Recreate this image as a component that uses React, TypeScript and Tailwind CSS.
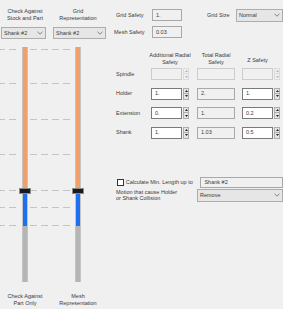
import React from "react";

const font = { fontFamily: '"Liberation Sans", Arial, sans-serif' };

function Chevron() {
  return (
    <svg width="6" height="4" viewBox="0 0 6 4" className="shrink-0">
      <path d="M0.5 0.8 L3 3.2 L5.5 0.8" fill="none" stroke="#6b6b6b" strokeWidth="0.8" />
    </svg>
  );
}

function Select({ w, h = 12, text }: { w: number; h?: number; text: string }) {
  return (
    <div
      className="flex items-center justify-between border border-[#adadad] bg-[#e6e6e6] pl-[2px] pr-[2px]"
      style={{ width: w, height: h }}
    >
      <span>{text}</span>
      <Chevron />
    </div>
  );
}

function Box({ w, text = "", kind }: { w: number; text?: string; kind: "edit" | "ro" | "dis" }) {
  const cls =
    kind === "edit"
      ? "border-[#7a7a7a] bg-white"
      : kind === "ro"
      ? "border-[#a8a8a8] bg-[#f0f0f0]"
      : "border-[#cccccc] bg-[#f0f0f0]";
  return (
    <div className={`flex h-[12px] items-center border pl-[3px] ${cls}`} style={{ width: w }}>
      {text}
    </div>
  );
}

function Spinner({ disabled }: { disabled?: boolean }) {
  const c = disabled ? "#b8b8b8" : "#222";
  const b = disabled ? "border-[#dcdcdc] bg-[#f0f0f0]" : "border-[#adadad] bg-[#e6e6e6]";
  return (
    <div className="ml-[1px] flex h-[12px] w-[6px] flex-col">
      <div className={`flex h-[6px] items-center justify-center border ${b}`}>
        <svg width="3" height="2" viewBox="0 0 3 2">
          <path d="M0 2 L1.5 0 L3 2 Z" fill={c} />
        </svg>
      </div>
      <div className={`flex h-[6px] items-center justify-center border border-t-0 ${b}`}>
        <svg width="3" height="2" viewBox="0 0 3 2">
          <path d="M0 0 L1.5 2 L3 0 Z" fill={c} />
        </svg>
      </div>
    </div>
  );
}

function Dashes({ w, offset = 0 }: { w: number; offset?: number }) {
  const n = Math.ceil((w + offset) / 11) + 1;
  return (
    <div className="flex h-[1px] overflow-hidden" style={{ width: w }}>
      <div className="flex shrink-0 gap-[4px]" style={{ marginLeft: -offset }}>
        {Array.from({ length: n }).map((_, i) => (
          <div key={i} className="h-[1px] w-[7px] shrink-0 bg-[#c4c4c4]" />
        ))}
      </div>
    </div>
  );
}

function Track() {
  return (
    <div className="relative flex h-[235px] w-[6px] flex-col border-x border-[#c4c4c4]">
      <div className="h-[141px] bg-[#f2a06b]" />
      <div className="h-[38px] bg-[#1f6ff2]" />
      <div className="flex-1 bg-[#b5b5b5]" />
      <div className="absolute left-[-4px] top-[141px] h-[6px] w-[12px] border border-[#8a8a8a] bg-[#1a1a1a]" />
    </div>
  );
}

export default function App() {
  const lineYs = [2, 36, 72, 107, 143, 160, 178];
  return (
    <div
      className="flex h-[309px] w-[283px] overflow-hidden bg-[#f0f0f0] text-[5.5px] text-[#3a3a3a]"
      style={font}
    >
      {/* left panel */}
      <div className="flex w-[110px] flex-col">
        <div className="flex h-[26px] pt-[8px] leading-[6.5px]">
          <div className="w-[50px] text-center">
            Check Against
            <br />
            Stock and Part
          </div>
          <div className="w-[56px] text-center">
            Grid
            <br />
            Representation
          </div>
        </div>
        <div className="mt-[1px] flex">
          <div className="ml-[1px]">
            <Select w={45} text="Shank #2" />
          </div>
          <div className="ml-[7px]">
            <Select w={53} text="Shank #2" />
          </div>
        </div>
        <div className="relative mt-[8px] h-[235px]">
          {lineYs.map((y) => (
            <div key={y} className="absolute left-0 flex" style={{ top: y }}>
              <Dashes w={18} offset={2} />
              <div className="ml-[12px]">
                <Dashes w={42} />
              </div>
            </div>
          ))}
          <div className="relative flex">
            <div className="ml-[22px]">
              <Track />
            </div>
            <div className="ml-[47px]">
              <Track />
            </div>
          </div>
        </div>
        <div className="mt-[11px] flex leading-[6.5px]">
          <div className="w-[50px] text-center">
            Check Against
            <br />
            Part Only
          </div>
          <div className="w-[56px] text-center">
            Mesh
            <br />
            Representation
          </div>
        </div>
      </div>

      {/* right panel */}
      <div className="flex w-[173px] flex-col">
        <div className="mt-[9px] flex h-[12px] items-center">
          <span className="ml-[6px] w-[36px] whitespace-nowrap">Grid Safety</span>
          <Box w={30} text="1." kind="ro" />
          <span className="ml-[25px] w-[29px] whitespace-nowrap">Grid Size</span>
          <Select w={47} h={13} text="Normal" />
        </div>
        <div className="mt-[5px] flex h-[12px] items-center">
          <span className="ml-[4px] w-[38px] whitespace-nowrap">Mesh Safety</span>
          <Box w={30} text="0.03" kind="ro" />
        </div>

        <div className="mt-[14px] flex h-[16px] whitespace-nowrap leading-[6.5px]">
          <div className="w-[41px]" />
          <div className="flex w-[38px] flex-col items-center">
            <span>Additional Radial</span>
            <span>Safety</span>
          </div>
          <div className="ml-[8px] flex w-[38px] flex-col items-center">
            <span>Total Radial</span>
            <span>Safety</span>
          </div>
          <div className="ml-[7px] flex w-[31px] items-center justify-center">Z Safety</div>
        </div>

        <div className="flex flex-col gap-[7.5px]">
          {[
            { l: "Spindle", a: "", t: "", z: "", dis: true },
            { l: "Holder", a: "1.", t: "2.", z: "1." },
            { l: "Extension", a: "0.", t: "1.", z: "0.2" },
            { l: "Shank", a: "1.", t: "1.03", z: "0.5" },
          ].map((r) => (
            <div key={r.l} className="flex h-[12px] items-center">
              <span className="ml-[6px] w-[35px]">{r.l}</span>
              <Box w={31} text={r.a} kind={r.dis ? "dis" : "edit"} />
              <Spinner disabled={r.dis} />
              <div className="ml-[8px]">
                <Box w={38} text={r.t} kind={r.dis ? "dis" : "ro"} />
              </div>
              <div className="ml-[7px]">
                <Box w={31} text={r.z} kind={r.dis ? "dis" : "edit"} />
              </div>
              <Spinner disabled={r.dis} />
            </div>
          ))}
        </div>

        <div className="mt-[38px] flex h-[11px] items-center">
          <div className="ml-[7px] h-[7px] w-[7px] border border-[#333] bg-white" />
          <span className="ml-[2px] w-[78px] whitespace-nowrap">Calculate Min. Length up to</span>
          <div className="flex h-[11px] w-[86px] items-center border border-[#a8a8a8] bg-[#f0f0f0] pl-[3px]">
            Shank #2
          </div>
        </div>
        <div className="mt-[1px] flex h-[13px] items-center">
          <div className="ml-[6px] w-[81px] whitespace-nowrap leading-[6.5px]">
            Motion that cause Holder
            <br />
            or Shank Collision
          </div>
          <Select w={86} h={13} text="Remove" />
        </div>
      </div>
    </div>
  );
}
